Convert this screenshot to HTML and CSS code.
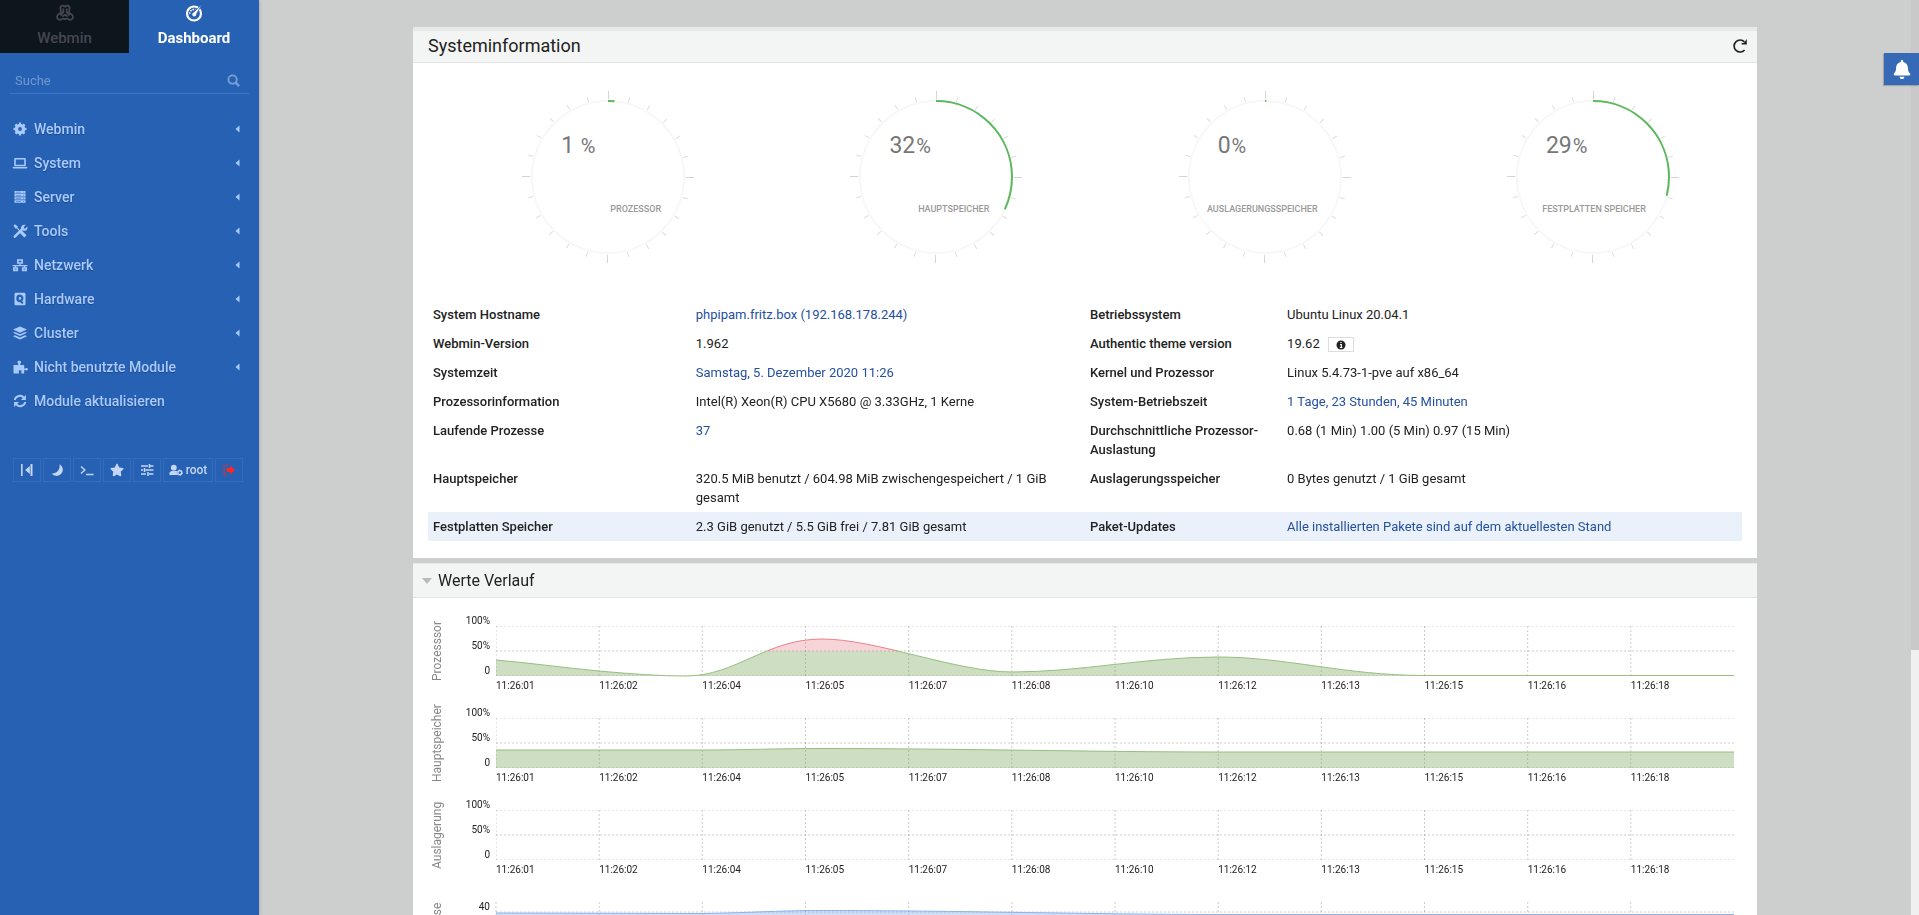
FILE: index.html
```html
<!DOCTYPE html>
<html lang="de">
<head>
    <meta charset="UTF-8">
    <meta name="viewport" content="width=device-width, initial-scale=1.0">
    <title>Webmin - Dashboard</title>
    <link rel="stylesheet" href="styles.css">
</head>
<body>
    <!-- shared shapes -->
    <svg class="defs" aria-hidden="true">
        <symbol id="dial" viewBox="0 0 174 174">
            <g fill="none" transform="rotate(-90 87 87)">
                <circle cx="87" cy="87" r="76" stroke="#f7f7f7" stroke-width="2"/>
                <circle cx="87" cy="87" r="80" stroke="#dcdcdc" stroke-width="5" pathLength="360" stroke-dasharray="0.7 14.3"/>
                <circle cx="87" cy="87" r="82" stroke="#fff" stroke-width="9" pathLength="360" stroke-dasharray="2 88" stroke-dashoffset="1"/>
                <circle cx="87" cy="87" r="82" stroke="#d4d4d4" stroke-width="8" pathLength="360" stroke-dasharray="0.7 89.3"/>
            </g>
        </symbol>
        <symbol id="caret" viewBox="0 0 8 12"><path d="M6.500 2.500v7L2.500 6z"/></symbol>
        <symbol id="grid" viewBox="0 0 1238 50" preserveAspectRatio="none">
            <path d="M0 0H1238M0 25H1238M0 50H1238M0 0V50M103.200 0V50M206.300 0V50M309.500 0V50M412.700 0V50M515.800 0V50M619 0V50M722.200 0V50M825.300 0V50M928.500 0V50M1031.700 0V50M1134.800 0V50"/>
        </symbol>
        <clipPath id="above"><rect x="0" y="-5" width="1238" height="30"/></clipPath>
        <clipPath id="below"><rect x="0" y="25" width="1238" height="30"/></clipPath>
    </svg>

    <aside class="sidebar">
        <div class="tabs">
            <a class="tab" href="#webmin">
                <svg viewBox="0 0 18 18" fill="none" stroke="currentColor" stroke-width="1.800" stroke-linejoin="round"><path d="M9 2.800C7.800 1 4.400 1 4.400 4.200c0 2 1 3.300.4 4.400C3.800 9.900 1 10.200 1 12.800c0 2.700 2.700 3.600 4.500 2.500 1.300-.8 2.200-.9 3.500-.1 1.300-.8 2.200-.7 3.500.1 1.800 1.100 4.500.2 4.500-2.500 0-2.600-2.800-2.900-3.800-4.200-.6-1.100.4-2.400.4-4.400C13.600 1 10.200 1 9 2.800zM7.300 4.500v3.700L4.500 11.500M10.700 4.500v3.700l2.800 3.300M6.300 12.500L9 10.700l2.700 1.800"/></svg>
                <span>Webmin</span>
            </a>
            <a class="tab active" href="#dashboard">
                <svg viewBox="0 0 18 18" fill="none" stroke="currentColor"><circle cx="9" cy="9.500" r="7" stroke-width="2.200"/><path d="M4.800 9.800A4.300 4.300 0 0 1 10.500 5.600" stroke-width="1.600" stroke-dasharray="1.500 1"/><path d="M16.800.6L10.800 11.400 7.600 9.200z" fill="currentColor" stroke="#2761b3" stroke-width=".8"/><circle cx="9.200" cy="10.500" r="1.900" fill="currentColor" stroke="none"/></svg>
                <span>Dashboard</span>
            </a>
        </div>

        <form class="search">
            <input type="text" placeholder="Suche" aria-label="Suche">
            <svg viewBox="0 0 14 14" fill="none" stroke="currentColor" stroke-width="2"><circle cx="6" cy="6" r="4.500"/><path d="M9.300 9.300L13 13" stroke-width="2.600"/></svg>
        </form>

        <nav>
            <ul class="menu">
                <li><a href="#"><svg class="icon" viewBox="0 0 16 16"><circle cx="8" cy="8" r="3.600" fill="none" stroke="currentColor" stroke-width="3.400"/><circle cx="8" cy="8" r="5.500" fill="none" stroke="currentColor" stroke-width="2" pathLength="16" stroke-dasharray="1 1" stroke-dashoffset=".5"/></svg><span>Webmin</span><svg class="caret"><use href="#caret"/></svg></a></li>
                <li><a href="#"><svg class="icon" viewBox="0 0 16 16"><path d="M3.200 3h9.600q1 0 1 1v7.200H2.200V4q0-1 1-1zm.6 1.600v5.200h8.400V4.600zM.6 12h14.800v.5q0 1-1.200 1H1.800q-1.200 0-1.200-1z" fill-rule="evenodd"/></svg><span>System</span><svg class="caret"><use href="#caret"/></svg></a></li>
                <li><a href="#"><svg class="icon" viewBox="0 0 16 16"><path d="M2.500 2h11v2.400h-11zM2.500 5.100h11v2.400h-11zM2.500 8.200h11v2.400h-11zM2.500 11.300h11v2.400h-11z"/><path d="M4 3.200h5M4 6.300h5M4 9.400h5M4 12.500h5M11 3.200h1M11 6.300h1M11 9.400h1M11 12.500h1" stroke="#2761b3" stroke-width=".5"/></svg><span>Server</span><svg class="caret"><use href="#caret"/></svg></a></li>
                <li><a href="#"><svg class="icon" viewBox="0 0 16 16"><path d="M1.500 2.600L3 1.300l2.600 2v1.500l3.100 3.100 1.600.2 4.200 4.200-2.100 2.200-4.300-4.200-.2-1.700-3.100-3.100H3.400z"/><path d="M2.800 13.600L11 5.400" stroke="currentColor" stroke-width="2.600" stroke-linecap="round"/><path d="M13.700 1.900l-2.300 2.300.4 1.300 1.300.3 2.200-2.200c.8 2.600-1.200 4.600-3.700 4.200L8.900 5.100C8.900 2.900 11 1 13.700 1.900z"/></svg><span>Tools</span><svg class="caret"><use href="#caret"/></svg></a></li>
                <li><a href="#"><svg class="icon" viewBox="0 0 16 16" fill="none" stroke="currentColor" stroke-width="1.600"><path d="M5.800 3h4.400v3H5.800zM1.800 11h3.500v2.400H1.800zM10.700 11h3.500v2.400h-3.500z"/><path d="M8 6.500v2M.5 8.600h15M3.500 8.600v2M12.500 8.600v2" stroke-width="1.300"/></svg><span>Netzwerk</span><svg class="caret"><use href="#caret"/></svg></a></li>
                <li><a href="#"><svg class="icon" viewBox="0 0 16 16"><path d="M3.800 1.800h8.400q1.300 0 1.300 1.300v9.800q0 1.300-1.300 1.300H3.800q-1.300 0-1.300-1.300V3.100q0-1.300 1.300-1.300zM8 3.500a3.900 3.900 0 1 0 .3 7.800l1.700 1.700 1.600-1-1.300-1.800A3.900 3.900 0 0 0 8 3.500zm0 2.600a1.300 1.300 0 1 1 0 2.600 1.300 1.300 0 0 1 0-2.600z" fill-rule="evenodd"/></svg><span>Hardware</span><svg class="caret"><use href="#caret"/></svg></a></li>
                <li><a href="#"><svg class="icon" viewBox="0 0 16 16"><path d="M8 1.500l7 3.100-7 3.200-7-3.200zM2.900 6.900L8 9.200l5.100-2.300L15 7.800l-7 3.200-7-3.200zM2.900 10.300L8 12.600l5.100-2.300 1.900.9-7 3.200-7-3.200z"/></svg><span>Cluster</span><svg class="caret"><use href="#caret"/></svg></a></li>
                <li><a href="#"><svg class="icon" viewBox="0 0 16 16"><path d="M1.500 6h4.700q.3-1-.3-1.700A1.700 1.700 0 1 1 8.600 4.300Q8 5 8.300 6h3.900v3.400q.8.300 1.600-.2c2.300-1.200 3 2.500.8 2.300-.9-.1-1.200-.6-2.400-.3v3.300H9.300q-.3-1 .2-1.700c.9-1.800-3.400-2.200-2.700.2.200.6.500.8.200 1.500H1.500z"/></svg><span>Nicht benutzte Module</span><svg class="caret"><use href="#caret"/></svg></a></li>
                <li><a href="#"><svg class="icon" viewBox="0 0 16 16"><path d="M2.700 7A5.300 5.300 0 0 1 12 4.800M13.300 9A5.300 5.300 0 0 1 4 11.200" fill="none" stroke="currentColor" stroke-width="1.900"/><path d="M13.900 1.900v5H8.900zM2.100 14.100v-5h5z"/></svg><span>Module aktualisieren</span></a></li>
            </ul>
        </nav>

        <div class="toolbar">
            <button type="button" aria-label="Menü einklappen"><svg viewBox="0 0 14 14"><path d="M1 1h1.600v12H1zM10.500 1h2v12h-2zM9.800 3v8L5.200 7z"/></svg></button>
            <button type="button" aria-label="Nachtmodus"><svg viewBox="0 0 14 14"><path d="M9.500 1.200a6.200 6.200 0 1 1-8 9c3.800 1.200 9-2.500 8-9z"/></svg></button>
            <button type="button" aria-label="Terminal"><svg viewBox="0 0 14 14" fill="none" stroke="currentColor" stroke-width="1.500"><path d="M1 3.500L4.800 7 1 10.500M6 11.500h7.500"/></svg></button>
            <button type="button" aria-label="Favoriten"><svg viewBox="0 0 576 512"><path d="M259.300 17.800L194 150.200 47.900 171.500c-26.200 3.800-36.700 36.100-17.700 54.600l105.700 103-25 145.500c-4.500 26.300 23.200 46 46.400 33.700L288 439.600l130.700 68.700c23.200 12.200 50.900-7.400 46.400-33.700l-25-145.500 105.700-103c19-18.500 8.500-50.800-17.700-54.600L382 150.200 316.700 17.800c-11.700-23.600-45.600-23.900-57.400 0z"/></svg></button>
            <button type="button" aria-label="Einstellungen"><svg viewBox="0 0 14 14" fill="none" stroke="currentColor" stroke-width="1.500"><path d="M1 3h7M10 3h3.500M1 7h2M5.500 7h8M1 11h5M9 11h4.500M9.500 1v4M4.500 5v4M8 9v4"/></svg></button>
            <button type="button" class="account"><svg viewBox="0 0 16 14"><circle cx="5.500" cy="4.300" r="3.300"/><path d="M.5 12.800V11c0-2 1.500-3 3-3h4c.7 0 1.200.2 1.700.5-.6 1.700-.2 3.200.8 4.300z"/><circle cx="12.300" cy="10" r="2.200" fill="none" stroke="currentColor" stroke-width="1.700"/><circle cx="12.300" cy="10" r="3.200" fill="none" stroke="currentColor" stroke-width="1" pathLength="12" stroke-dasharray="1 1"/></svg>root</button>
            <button type="button" class="logout" aria-label="Abmelden"><svg viewBox="0 0 14 14"><path d="M5.500 2.200H3.300q-1.300 0-1.300 1.300v7q0 1.300 1.300 1.300h2.200" fill="none" stroke="currentColor" stroke-width="1.200" stroke-dasharray="2 1"/><path d="M4.800 4.900h3.400V2.400L13 7l-4.800 4.600V9.100H4.800z"/></svg></button>
        </div>
    </aside>

    <main>
        <section class="panel panel-info">
            <header class="panel-head">
                <h1>Systeminformation</h1>
                <button type="button" class="refresh" aria-label="Aktualisieren"><svg viewBox="0 0 16 16"><path d="M12.600 12A6 6 0 1 1 12.400 3.800" fill="none" stroke="currentColor" stroke-width="1.700"/><path d="M14.800 1v5.400H9.600V5h2.200z"/></svg></button>
            </header>

            <div class="gauges">
                <div class="gauge">
                    <svg viewBox="0 0 174 174"><use href="#dial"/><circle class="arc" cx="87" cy="87" r="76" pathLength="100" stroke-dasharray="1.400 100" transform="rotate(-90 87 87)"/></svg>
                    <p class="value">1 <small>%</small></p>
                    <p class="name">Prozessor</p>
                </div>
                <div class="gauge">
                    <svg viewBox="0 0 174 174"><use href="#dial"/><circle class="arc" cx="87" cy="87" r="76" pathLength="100" stroke-dasharray="32 100" transform="rotate(-90 87 87)"/></svg>
                    <p class="value">32<small>%</small></p>
                    <p class="name">Hauptspeicher</p>
                </div>
                <div class="gauge">
                    <svg viewBox="0 0 174 174"><use href="#dial"/><circle class="arc" cx="87" cy="87" r="76" pathLength="100" stroke-dasharray=".3 100" transform="rotate(-90 87 87)"/></svg>
                    <p class="value">0<small>%</small></p>
                    <p class="name">Auslagerungsspeicher</p>
                </div>
                <div class="gauge">
                    <svg viewBox="0 0 174 174"><use href="#dial"/><circle class="arc" cx="87" cy="87" r="76" pathLength="100" stroke-dasharray="29 100" transform="rotate(-90 87 87)"/></svg>
                    <p class="value">29<small>%</small></p>
                    <p class="name">Festplatten Speicher</p>
                </div>
            </div>

            <table class="info">
                <colgroup><col class="c1"><col class="c2"><col class="c3"><col class="c4"></colgroup>
                <tbody>
                    <tr><th scope="row">System Hostname</th><td><a href="#">phpipam.fritz.box (192.168.178.244)</a></td><th scope="row">Betriebssystem</th><td>Ubuntu Linux 20.04.1</td></tr>
                    <tr><th scope="row">Webmin-Version</th><td>1.962</td><th scope="row">Authentic theme version</th><td>19.62 <button type="button" class="badge" aria-label="Info"><svg viewBox="0 0 10 10"><circle cx="5" cy="5" r="4.500"/><path d="M4 4.500h1.300V7.500M3.800 7.500h2.600M4.300 2.500h1.400" fill="none" stroke="#fff" stroke-width="1.200"/></svg></button></td></tr>
                    <tr><th scope="row">Systemzeit</th><td><a href="#">Samstag, 5. Dezember 2020 11:26</a></td><th scope="row">Kernel und Prozessor</th><td>Linux 5.4.73-1-pve auf x86_64</td></tr>
                    <tr><th scope="row">Prozessorinformation</th><td>Intel(R) Xeon(R) CPU X5680 @ 3.33GHz, 1 Kerne</td><th scope="row">System-Betriebszeit</th><td><a href="#">1 Tage, 23 Stunden, 45 Minuten</a></td></tr>
                    <tr><th scope="row">Laufende Prozesse</th><td><a href="#">37</a></td><th scope="row">Durchschnittliche Prozessor-Auslastung</th><td>0.68 (1 Min) 1.00 (5 Min) 0.97 (15 Min)</td></tr>
                    <tr><th scope="row">Hauptspeicher</th><td>320.5 MiB benutzt / 604.98 MiB zwischengespeichert / 1 GiB gesamt</td><th scope="row">Auslagerungsspeicher</th><td>0 Bytes genutzt / 1 GiB gesamt</td></tr>
                    <tr class="hover"><th scope="row">Festplatten Speicher</th><td>2.3 GiB genutzt / 5.5 GiB frei / 7.81 GiB gesamt</td><th scope="row">Paket-Updates</th><td><a href="#">Alle installierten Pakete sind auf dem aktuellesten Stand</a></td></tr>
                </tbody>
            </table>
        </section>

        <section class="panel panel-history">
            <header class="panel-head">
                <h2><span class="arrow"></span>Werte Verlauf</h2>
            </header>

            <div class="charts">
                <div class="chart">
                    <h3>Prozesssor</h3>
                    <div class="ylabels"><span>100%</span><span>50%</span><span>0</span></div>
                    <div class="plot">
                        <svg viewBox="0 0 1238 50" preserveAspectRatio="none">
                            <use class="grid" href="#grid"/>
                            <g class="green" clip-path="url(#below)">
                                <path class="fill" d="M0 34C35 37 70 42 103 45S165 50 190 50C240 50 270 13 326 13C380 13 460 46 516 46C585 46 650 31 722 31C790 31 850 49.500 928 49.500H1238V50H0z"/>
                                <path class="line" d="M0 34C35 37 70 42 103 45S165 50 190 50C240 50 270 13 326 13C380 13 460 46 516 46C585 46 650 31 722 31C790 31 850 49.500 928 49.500H1238"/>
                            </g>
                            <g class="red" clip-path="url(#above)">
                                <path class="fill" d="M190 50C240 50 270 13 326 13C380 13 460 46 516 46V50z"/>
                                <path class="line" d="M190 50C240 50 270 13 326 13C380 13 460 46 516 46"/>
                            </g>
                        </svg>
                        <div class="xlabels"><span>11:26:01</span><span>11:26:02</span><span>11:26:04</span><span>11:26:05</span><span>11:26:07</span><span>11:26:08</span><span>11:26:10</span><span>11:26:12</span><span>11:26:13</span><span>11:26:15</span><span>11:26:16</span><span>11:26:18</span></div>
                    </div>
                </div>

                <div class="chart">
                    <h3>Hauptspeicher</h3>
                    <div class="ylabels"><span>100%</span><span>50%</span><span>0</span></div>
                    <div class="plot">
                        <svg viewBox="0 0 1238 50" preserveAspectRatio="none">
                            <use class="grid" href="#grid"/>
                            <g class="green">
                                <path class="fill" d="M0 32H206C250 32 280 30.500 326 30.500C460 30.500 600 34 722 34H1238V50H0z"/>
                                <path class="line" d="M0 32H206C250 32 280 30.500 326 30.500C460 30.500 600 34 722 34H1238"/>
                            </g>
                        </svg>
                        <div class="xlabels"><span>11:26:01</span><span>11:26:02</span><span>11:26:04</span><span>11:26:05</span><span>11:26:07</span><span>11:26:08</span><span>11:26:10</span><span>11:26:12</span><span>11:26:13</span><span>11:26:15</span><span>11:26:16</span><span>11:26:18</span></div>
                    </div>
                </div>

                <div class="chart">
                    <h3>Auslagerung</h3>
                    <div class="ylabels"><span>100%</span><span>50%</span><span>0</span></div>
                    <div class="plot">
                        <svg viewBox="0 0 1238 50" preserveAspectRatio="none">
                            <use class="grid" href="#grid"/>
                        </svg>
                        <div class="xlabels"><span>11:26:01</span><span>11:26:02</span><span>11:26:04</span><span>11:26:05</span><span>11:26:07</span><span>11:26:08</span><span>11:26:10</span><span>11:26:12</span><span>11:26:13</span><span>11:26:15</span><span>11:26:16</span><span>11:26:18</span></div>
                    </div>
                </div>

                <div class="chart">
                    <h3>Prozesse</h3>
                    <div class="ylabels ylabels-count"><span>40</span><span>20</span><span>0</span></div>
                    <div class="plot">
                        <svg viewBox="0 0 1238 50" preserveAspectRatio="none">
                            <path class="grid" d="M0 10H1238M0 30H1238M0 50H1238M0 0V50M103.200 0V50M206.300 0V50M309.500 0V50M412.700 0V50M515.800 0V50M619 0V50M722.200 0V50M825.300 0V50M928.500 0V50M1031.700 0V50M1134.800 0V50"/>
                            <g class="blue">
                                <path class="fill" d="M0 11L206 11.500C250 11 280 8.500 326 8.500C460 8.500 600 12.500 722 12.500H1238V50H0z"/>
                                <path class="line" d="M0 11L206 11.500C250 11 280 8.500 326 8.500C460 8.500 600 12.500 722 12.500H1238"/>
                            </g>
                        </svg>
                    </div>
                </div>
            </div>
        </section>
    </main>

    <button type="button" class="notifications" aria-label="Benachrichtigungen"><svg viewBox="0 0 448 512"><path d="M224 512c35.320 0 63.970-28.650 63.970-64H160.030c0 35.350 28.650 64 63.970 64zm215.390-149.710c-19.320-20.760-55.470-51.990-55.470-154.290 0-77.700-54.480-139.900-127.940-155.160V32c0-17.670-14.320-32-31.980-32s-31.980 14.330-31.980 32v20.840C118.560 68.100 64.080 130.300 64.080 208c0 102.300-36.150 133.530-55.470 154.290-6 6.450-8.660 14.160-8.610 21.710.11 16.400 12.980 32 32.100 32h383.800c19.120 0 32-15.600 32.100-32 .05-7.550-2.610-15.270-8.610-21.710z"/></svg></button>
    <div class="scrollbar"><div class="thumb"></div></div>
</body>
</html>
```

FILE: styles.css
```css
* {
    box-sizing: border-box;
}
body {
    display: flex;
    height: 100vh;
    margin: 0;
    overflow: hidden;
    background: #cdcfce;
    color: #222;
    font-family: Roboto, "Noto Sans", sans-serif;
    font-size: 13px;
    line-height: 19px;
}
a {
    color: #2450a0;
    text-decoration: none;
}
button {
    font-family: inherit;
    cursor: pointer;
}
svg:not([fill]) {
    fill: currentColor;
}
.defs {
    position: absolute;
    width: 0;
    height: 0;
}

/* sidebar */
.sidebar {
    flex: 0 0 259px;
    height: 100vh;
    background: #2761b3;
    box-shadow: 1px 0 3px rgba(0, 0, 0, 0.15);
}
.tabs {
    display: grid;
    grid-template-columns: 129px 1fr;
    height: 53px;
}
.tab {
    display: flex;
    flex-direction: column;
    align-items: center;
    gap: 6px;
    padding-top: 4px;
    background: #0d151d;
    color: #44474e;
    font-size: 15px;
    font-weight: 500;
    line-height: 20px;
}
.tab svg {
    width: 18px;
    height: 18px;
}
.tab.active {
    background: #2761b3;
    color: #fff;
    font-weight: 700;
}
.search {
    display: flex;
    align-items: center;
    margin: 15px 10px 0 9px;
    padding: 0 9px 0 6px;
    height: 26px;
    border-bottom: 1px solid #3a75c9;
    color: #7a9fd4;
}
.search input {
    flex: 1;
    min-width: 0;
    padding: 0;
    border: 0;
    outline: 0;
    background: none;
    color: #fff;
    font: inherit;
}
.search input::placeholder {
    color: #7197d0;
}
.search svg {
    width: 13px;
    height: 13px;
}
.menu {
    margin: 18px 0 0;
    padding: 0;
    list-style: none;
}
.menu a {
    display: flex;
    align-items: center;
    height: 34px;
    padding: 0 18px 0 12px;
    color: #a9caff;
    font-size: 14px;
    font-weight: 500;
    text-shadow: 0 1px 1px rgba(0, 0, 0, 0.25);
}
.menu span {
    flex: 1;
}
.icon {
    width: 16px;
    height: 16px;
    margin-right: 6px;
}
.caret {
    width: 8px;
    height: 12px;
}
.toolbar {
    display: flex;
    gap: 2px;
    margin: 40px 16px 0 13px;
}
.toolbar button {
    display: flex;
    flex: 1;
    align-items: center;
    justify-content: center;
    gap: 3px;
    height: 24px;
    padding: 0;
    border: 1px solid #356cbd;
    background: none;
    color: #c3d6f5;
    font-size: 12px;
    font-weight: 500;
}
.toolbar svg {
    width: 14px;
    height: 14px;
}
.toolbar .account {
    flex: 0 0 50px;
}
.toolbar .logout {
    color: #ff2525;
}

/* content */
main {
    flex: 1;
    min-width: 0;
    padding: 27px 162px 0 154px;
}
.panel {
    background: #fff;
    margin-bottom: 5px;
}
.panel-head {
    display: flex;
    align-items: center;
    justify-content: space-between;
    height: 35px;
    padding: 0 9px 0 15px;
    border-top: 1px solid #e7e8e8;
    border-bottom: 1px solid #e3e5e4;
    background: #f3f5f4;
}
.panel-info .panel-head {
    height: 36px;
    padding-bottom: 2px;
    border-top-width: 4px;
}
.panel-info {
    padding-bottom: 17px;
}
.panel-head h1,
.panel-head h2 {
    display: flex;
    align-items: center;
    margin: 0;
    color: #222;
    font-size: 18px;
    font-weight: 400;
    line-height: 24px;
}
.panel-head h2 {
    font-size: 16px;
}
.panel-history .panel-head {
    padding-left: 9px;
}
.arrow {
    margin-right: 6px;
    border: 5px solid transparent;
    border-top: 6px solid #b9bbba;
    border-bottom: 0;
}
.refresh {
    display: flex;
    padding: 0;
    border: 0;
    background: none;
    color: #222;
}
.refresh svg {
    width: 16px;
    height: 16px;
}

/* gauges */
.gauges {
    display: grid;
    grid-template-columns: repeat(4, 1fr);
    padding: 27px 0 36px 31px;
}
.gauge {
    display: grid;
    grid-template: 174px / 174px;
    justify-content: center;
}
.gauge > * {
    grid-area: 1 / 1;
    margin: 0;
}
.arc {
    fill: none;
    stroke: #5cb85c;
    stroke-width: 2;
}
.value {
    padding: 42px 0 0 40px;
    color: #777;
    font-size: 23px;
    line-height: 27px;
}
.value small {
    padding-left: 1px;
    font-size: 20px;
}
.name {
    align-self: end;
    padding: 0 34px 47px 0;
    color: #999;
    font-size: 9px;
    font-weight: 500;
    line-height: 16px;
    text-align: right;
    text-transform: uppercase;
}

/* system table */
.info {
    width: calc(100% - 30px);
    margin: 0 15px;
    border-collapse: collapse;
    table-layout: fixed;
}
.c1 {
    width: 20%;
}
.c2 {
    width: 30%;
}
.c3 {
    width: 15%;
}
.info th,
.info td {
    padding: 5px;
    text-align: left;
    vertical-align: top;
}
.info th {
    font-weight: 500;
}
.info .hover {
    background: #eaf1fb;
}
.badge {
    height: 15px;
    margin: -2px 0 -2px 5px;
    padding: 0 7px;
    border: 1px solid #ddd;
    background: #fff;
    color: #222;
    line-height: 0;
    vertical-align: middle;
}
.badge svg {
    width: 10px;
    height: 10px;
}

/* history charts */
.charts {
    padding: 11px 23px 20px 15px;
}
.chart {
    display: grid;
    grid-template-columns: 18px 50px 1fr;
    height: 92px;
    padding-top: 17px;
}
.chart h3 {
    display: flex;
    align-items: center;
    justify-content: center;
    height: 50px;
    margin: 0;
    color: #888;
    font-size: 12px;
    font-weight: 400;
    line-height: 18px;
    writing-mode: vertical-rl;
    transform: rotate(180deg);
}
.ylabels {
    display: grid;
    grid-template-rows: 25px 25px 25px;
    height: 75px;
    margin-top: -11px;
    padding-right: 6px;
    font-size: 10px;
    line-height: 12px;
    text-align: right;
}
.ylabels-count {
    grid-template-rows: 20px 20px 20px;
    margin-top: -1px;
}
.plot svg {
    display: block;
    width: 100%;
    height: 50px;
    overflow: visible;
}
.grid,
.line {
    fill: none;
    stroke-width: 1;
    vector-effect: non-scaling-stroke;
}
.grid {
    stroke: rgba(0, 0, 0, 0.2);
    stroke-dasharray: 2 2;
}
.fill {
    fill-opacity: 0.3;
}
.green {
    fill: #5b9334;
    stroke: #97be7f;
}
.red {
    fill: #e5707a;
    stroke: #e98089;
}
.blue {
    fill: #5b92e5;
    stroke: #8db2ea;
}
.fill {
    stroke: none;
}
.xlabels {
    display: grid;
    grid-template-columns: repeat(12, 1fr);
    padding-top: 4px;
    font-size: 10px;
    line-height: 12px;
}

/* overlays at the window edge */
.notifications {
    position: fixed;
    top: 53px;
    right: 0;
    display: flex;
    align-items: center;
    justify-content: center;
    width: 35px;
    height: 32px;
    padding: 0;
    border: 0;
    background: #376ab6;
    box-shadow: -1px 1px 1px rgba(0, 0, 0, 0.2);
    color: #fff;
}
.notifications svg {
    width: 18px;
    height: 19px;
}
.scrollbar {
    position: fixed;
    top: 0;
    right: 0;
    z-index: -1;
    width: 8px;
    height: 100vh;
    background: #f0f0f0;
}
.thumb {
    height: 71%;
    background: #c9c9c9;
}
```
